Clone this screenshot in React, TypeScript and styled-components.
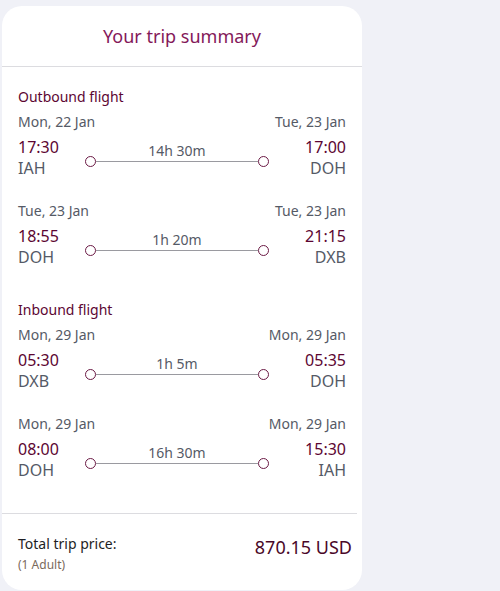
import React from "react";
import styled, { createGlobalStyle } from "styled-components";

const GlobalStyle = createGlobalStyle`
  html, body {
    margin: 0;
    padding: 0;
    background: #f0f1f7;
  }
  body {
    padding: 6px 0 0 2px;
    font-family: "Noto Sans", "Open Sans", sans-serif;
  }
`;

const Card = styled.div`
  width: 360px;
  height: 584px;
  background: #ffffff;
  border-radius: 20px;
  display: flex;
  flex-direction: column;
  box-sizing: border-box;
`;

const Header = styled.div`
  height: 60px;
  border-bottom: 1px solid #dcdce0;
  display: flex;
  align-items: center;
  justify-content: center;
`;

const Title = styled.h2`
  margin: 0;
  font-size: 18px;
  font-weight: 400;
  color: #84195a;
  line-height: 24px;
`;

const Body = styled.div`
  padding: 20px 16px 0 16px;
  flex: 1;
`;

const Section = styled.section<{ $gap: number }>`
  margin-top: ${(p) => p.$gap}px;
`;

const SectionTitle = styled.div`
  font-size: 14px;
  line-height: 20px;
  color: #5c0632;
  margin-bottom: 5px;
`;

const Segment = styled.div<{ $first: boolean }>`
  margin-top: ${(p) => (p.$first ? 0 : 23)}px;
`;

const DateRow = styled.div`
  display: flex;
  justify-content: space-between;
  font-size: 14px;
  line-height: 20px;
  color: #555a66;
  margin-bottom: 4px;
`;

const TimeRow = styled.div`
  display: flex;
  align-items: flex-start;
`;

const Endpoint = styled.div<{ $right?: boolean }>`
  display: flex;
  flex-direction: column;
  align-items: ${(p) => (p.$right ? "flex-end" : "flex-start")};
  margin-left: ${(p) => (p.$right ? "auto" : "0")};
`;

const Time = styled.div`
  font-size: 16px;
  line-height: 22px;
  color: #5c0632;
`;

const Airport = styled.div`
  font-size: 16px;
  line-height: 20px;
  color: #555a66;
`;

const Middle = styled.div`
  width: 184px;
  margin-left: 26px;
  padding-top: 6px;
  display: flex;
  flex-direction: column;
  align-items: center;
`;

const Duration = styled.div`
  font-size: 14px;
  line-height: 18px;
  color: #555a66;
`;

const Track = styled.div`
  width: 100%;
  display: flex;
  align-items: center;
  margin-top: -4px;
`;

const Dot = styled.span`
  width: 11px;
  height: 11px;
  box-sizing: border-box;
  border: 1.5px solid #6b1a45;
  border-radius: 50%;
  background: #fff;
  flex: none;
`;

const Line = styled.span`
  flex: 1;
  height: 1px;
  background: #9a9aa0;
`;

const Footer = styled.div`
  margin-right: 5px;
  border-top: 1px solid #dcdce0;
  height: 77px;
  padding: 20px 5px 0 16px;
  box-sizing: border-box;
  display: flex;
  justify-content: space-between;
  align-items: flex-start;
`;

const TotalLabel = styled.div`
  font-size: 14px;
  line-height: 20px;
  color: #1e1e24;
`;

const Pax = styled.div`
  font-size: 12px;
  line-height: 18px;
  margin-top: 2px;
  color: #7a6a5c;
`;

const Price = styled.div`
  font-size: 18px;
  line-height: 24px;
  color: #4a0828;
  padding-top: 1px;
`;

type Seg = {
  d1: string;
  d2: string;
  t1: string;
  t2: string;
  a1: string;
  a2: string;
  dur: string;
};

const sections: { title: string; gap: number; segs: Seg[] }[] = [
  {
    title: "Outbound flight",
    gap: 0,
    segs: [
      { d1: "Mon, 22 Jan", d2: "Tue, 23 Jan", t1: "17:30", t2: "17:00", a1: "IAH", a2: "DOH", dur: "14h 30m" },
      { d1: "Tue, 23 Jan", d2: "Tue, 23 Jan", t1: "18:55", t2: "21:15", a1: "DOH", a2: "DXB", dur: "1h 20m" },
    ],
  },
  {
    title: "Inbound flight",
    gap: 33,
    segs: [
      { d1: "Mon, 29 Jan", d2: "Mon, 29 Jan", t1: "05:30", t2: "05:35", a1: "DXB", a2: "DOH", dur: "1h 5m" },
      { d1: "Mon, 29 Jan", d2: "Mon, 29 Jan", t1: "08:00", t2: "15:30", a1: "DOH", a2: "IAH", dur: "16h 30m" },
    ],
  },
];

export default function App() {
  return (
    <>
      <GlobalStyle />
      <Card>
        <Header>
          <Title>Your trip summary</Title>
        </Header>
        <Body>
          {sections.map((s) => (
            <Section key={s.title} $gap={s.gap}>
              <SectionTitle>{s.title}</SectionTitle>
              {s.segs.map((g, i) => (
                <Segment key={i} $first={i === 0}>
                  <DateRow>
                    <span>{g.d1}</span>
                    <span>{g.d2}</span>
                  </DateRow>
                  <TimeRow>
                    <Endpoint>
                      <Time>{g.t1}</Time>
                      <Airport>{g.a1}</Airport>
                    </Endpoint>
                    <Middle>
                      <Duration>{g.dur}</Duration>
                      <Track>
                        <Dot />
                        <Line />
                        <Dot />
                      </Track>
                    </Middle>
                    <Endpoint $right>
                      <Time>{g.t2}</Time>
                      <Airport>{g.a2}</Airport>
                    </Endpoint>
                  </TimeRow>
                </Segment>
              ))}
            </Section>
          ))}
        </Body>
        <Footer>
          <div>
            <TotalLabel>Total trip price:</TotalLabel>
            <Pax>(1 Adult)</Pax>
          </div>
          <Price>870.15 USD</Price>
        </Footer>
      </Card>
    </>
  );
}
